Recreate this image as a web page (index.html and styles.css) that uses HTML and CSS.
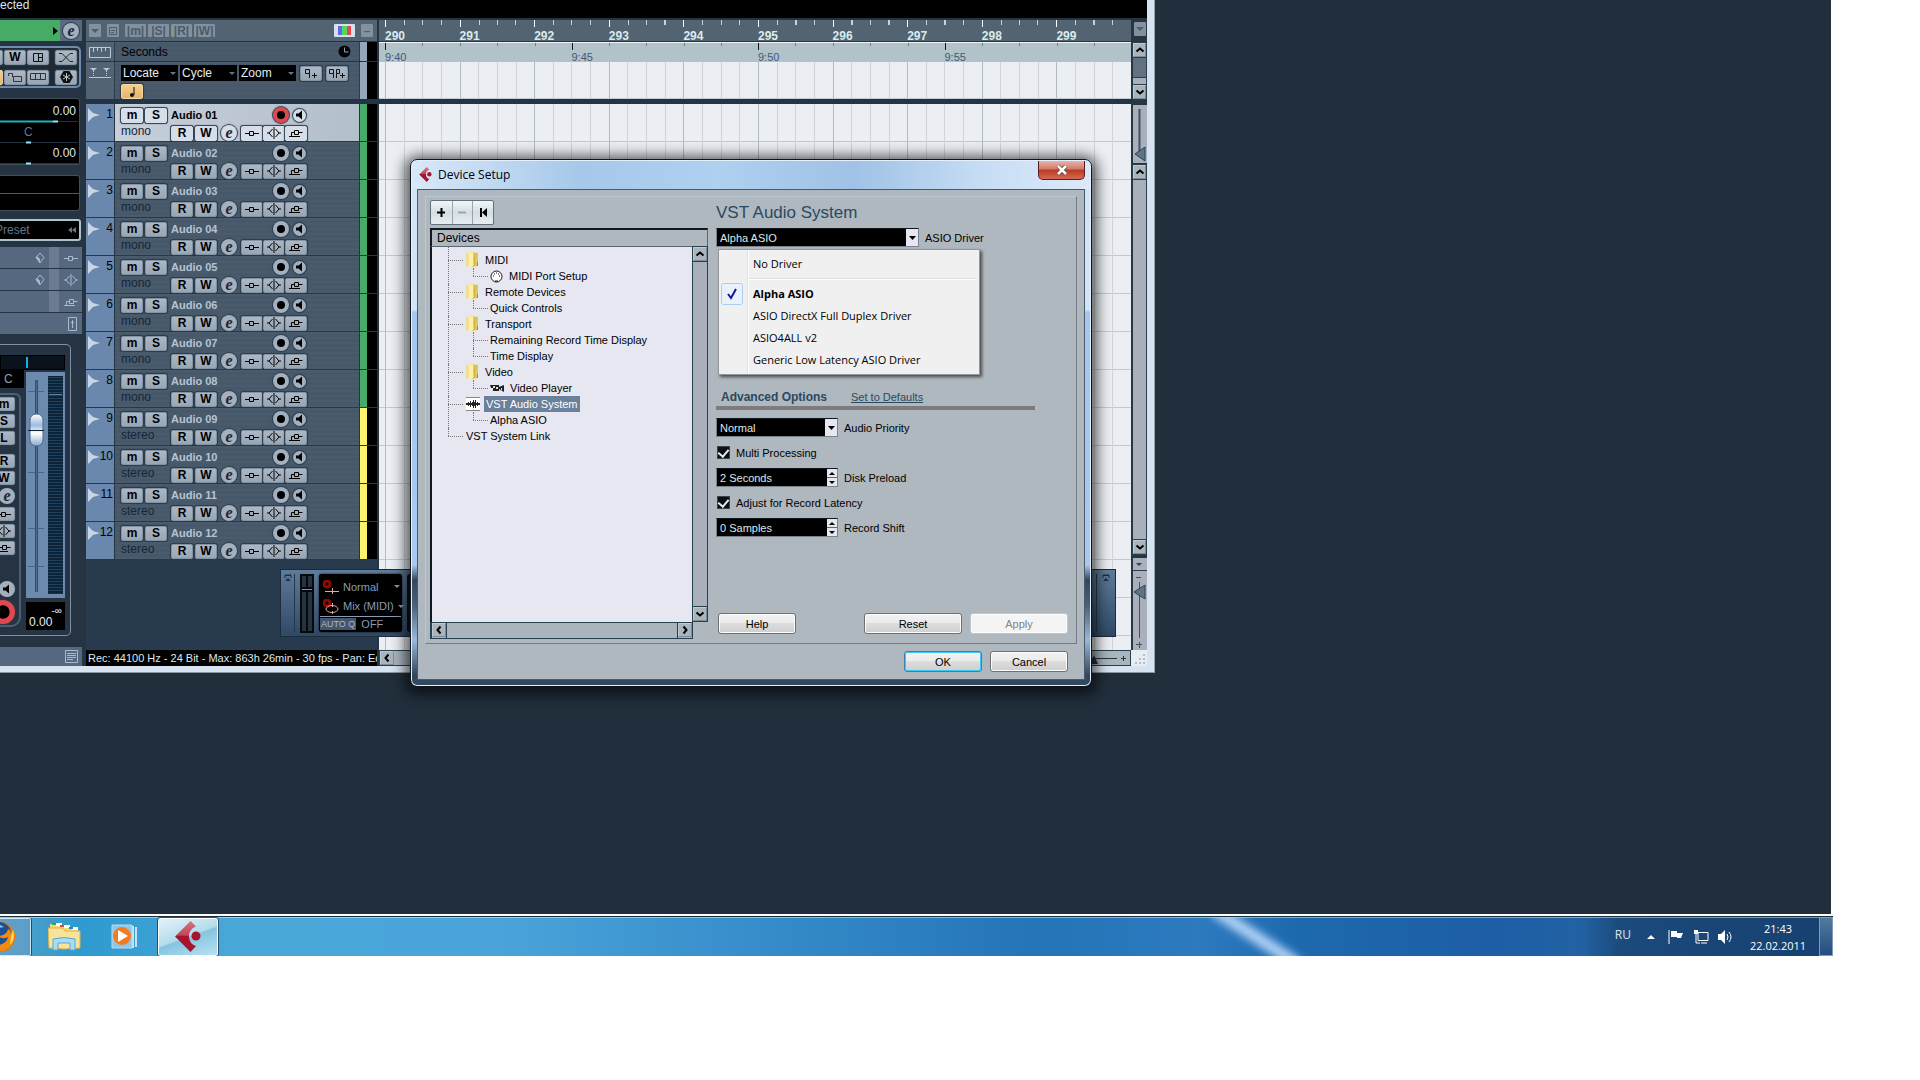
FILE: index.html
```html
<!DOCTYPE html>
<html lang="en">
<head>
<meta charset="utf-8">
<title>Device Setup</title>
<link rel="stylesheet" href="styles.css">
</head>
<body>
<svg class="symbols" aria-hidden="true">
  <symbol id="i-insert" viewBox="0 0 14 10"><path d="M0 5.500h4M9 5.500h5M4.500 3.500h4v4h-4z" fill="none" stroke="currentColor"/></symbol>
  <symbol id="i-eq" viewBox="0 0 14 12"><path d="M0 6h2M12 6h2M7 0v12M5.500 2L2 6l3.500 4M8.500 2L12 6l-3.500 4" fill="none" stroke="currentColor"/></symbol>
  <symbol id="i-send" viewBox="0 0 14 10"><path d="M0 8.500h11M2.500 8.500v-4h3M5.500 2.500h4v4h-4zM9.500 4.500h4" fill="none" stroke="currentColor"/></symbol>
  <symbol id="i-speaker" viewBox="0 0 10 10"><path d="M1 3.500h2.500L7 .5v9L3.500 6.500H1z" fill="currentColor"/></symbol>
  <symbol id="i-rec" viewBox="0 0 16 16"><circle cx="8" cy="8" r="4" fill="#000"/></symbol>
  <symbol id="i-wave" viewBox="0 0 12 14"><path d="M0 0L5 5 12 7 5 9 0 14z" fill="#c9d4e4"/></symbol>
  <symbol id="i-up" viewBox="0 0 10 10"><path d="M1.500 6.500L5 3.500l3.500 3" fill="none" stroke="currentColor" stroke-width="2"/></symbol>
  <symbol id="i-down" viewBox="0 0 10 10"><path d="M1.500 3.500L5 6.500l3.500-3" fill="none" stroke="currentColor" stroke-width="2"/></symbol>
  <symbol id="i-left" viewBox="0 0 10 10"><path d="M6.500 1.500L3.500 5l3 3.500" fill="none" stroke="currentColor" stroke-width="2"/></symbol>
  <symbol id="i-right" viewBox="0 0 10 10"><path d="M3.500 1.500L6.500 5l-3 3.500" fill="none" stroke="currentColor" stroke-width="2"/></symbol>
  <symbol id="i-tri" viewBox="0 0 8 4"><path d="M0 0h8L4 4z" fill="currentColor"/></symbol>
  <symbol id="i-diamond" viewBox="0 0 10 12"><path d="M5 1l4 4.500L5 11 1 5.500z" fill="none" stroke="currentColor"/><path d="M1 5.500L5 11V7L2 4z" fill="currentColor"/></symbol>
  <symbol id="i-folder" viewBox="0 0 13 16"><path d="M0 1l6-1v15l-6-1z" fill="#f3e08a"/><path d="M6 0l6 1v13l-6 1z" fill="#e2c458"/><path d="M3 1l5-1v14l-5 1z" fill="#fbf0b0"/><path d="M8 1v13" stroke="#c8a53c"/><path d="M11 10h1v4h-1z" fill="#4aa0e0"/></symbol>
  <symbol id="i-cubase" viewBox="0 0 26 31"><path d="M15.500 0L21 5.500A10 10 0 0 0 14 16a10 10 0 0 0 7 9L15.500 31 0 15.500z" fill="url(#cubase-red)"/><circle cx="21" cy="15" r="4.500" fill="#a8142c"/></symbol>
  <symbol id="i-eject" viewBox="0 0 8 8"><path d="M1 4V1h6v3M1 1.500h6" fill="none" stroke="currentColor"/><path d="M1 7h6L4 4z" fill="currentColor"/></symbol>
  <linearGradient id="cubase-red" x1="0" y1="0" x2="0" y2="1"><stop offset="0" stop-color="#d87480"/><stop offset=".45" stop-color="#c04858"/><stop offset=".5" stop-color="#a8142c"/><stop offset="1" stop-color="#a8142c"/></linearGradient>
</svg>

<main class="desktop">
  <section class="app">
    <header class="info-line">ected</header>
    <div class="workspace">

      <aside class="inspector">
        <div class="insp-title"><span class="insp-name"><svg width="5" height="8" viewBox="0 0 5 8"><path d="M0 0l5 4-5 4z"/></svg></span><button class="round edit">e</button></div>
        <div class="insp-tools">
          <button class="key" aria-label="Read"></button><button class="key">W</button>
          <button class="key"><svg width="10" height="9" viewBox="0 0 10 9"><path d="M.5.500h9v8h-9zM5.500 0v9M5.500 4.500h4" fill="none" stroke="#111"/></svg></button>
          <button class="key apart"><svg width="14" height="9" viewBox="0 0 14 9"><path d="M0 .5h3l8 8h3M0 8.500h3l8-8h3" fill="none" stroke="#222"/></svg></button>
          <button class="key amber"></button>
          <button class="key"><svg width="14" height="10" viewBox="0 0 14 10"><path d="M.5 4V1.500h4V5M5.500 4.500h8v5h-8z" fill="none" stroke="#333"/></svg></button>
          <button class="key"><svg width="16" height="8" viewBox="0 0 16 8"><path d="M.5.500h15v6H.5zM5.500 0v7M10.500 0v7" fill="none" stroke="#333"/></svg></button>
          <button class="key apart"><svg width="13" height="12" viewBox="0 0 13 12"><path d="M3.500 0h6L13 6l-3.500 6h-6L0 6z" fill="#111"/><path d="M6.500 2v8M3 4l7 4M3 8l7-4" stroke="#b5c2d0"/></svg></button>
        </div>
        <div class="insp-values">
          <div class="val">0.00</div><svg width="82" height="3"><path d="M0 1.500h78" stroke="#26323f"/><path d="M0 1.500h53" stroke="#20b0c0" stroke-width="2"/><path d="M53 1.500h5" stroke="#90e8ff" stroke-width="2"/></svg>
          <div class="val center">C</div><svg width="82" height="3"><path d="M0 1.500h78" stroke="#26323f"/><path d="M26 1.500h5" stroke="#90e8ff" stroke-width="2"/></svg>
          <div class="val">0.00</div><svg width="82" height="3"><path d="M0 1.500h78" stroke="#26323f"/><path d="M26 1.500h5" stroke="#90e8ff" stroke-width="2"/></svg>
        </div>
        <div class="insp-routing"></div>
        <div class="insp-preset"><span>Preset</span><svg width="8" height="6" viewBox="0 0 8 6"><path d="M4 0v6L0 3zM8 0v6L4 3z" fill="currentColor"/></svg></div>
        <div class="insp-sections">
          <div><svg width="10" height="12"><use href="#i-diamond"/></svg><i></i><svg width="14" height="10"><use href="#i-insert"/></svg></div>
          <div><svg width="10" height="12"><use href="#i-diamond"/></svg><i></i><svg width="14" height="12"><use href="#i-eq"/></svg></div>
          <div><i></i><svg width="14" height="10"><use href="#i-send"/></svg></div>
          <div><svg width="10" height="14" viewBox="0 0 10 14"><path d="M.5.500h8v13h-8zM4.500 3v8M3 5.500h3" fill="none" stroke="currentColor"/></svg></div>
        </div>
        <div class="insp-fader">
          <div class="pan"><i></i></div>
          <div class="strip">
            <div class="strip-left">
              <span class="pan-value">C</span>
              <div class="strip-keys">
                <button class="key">m</button><button class="key">S</button><button class="key">L</button>
                <button class="key spaced">R</button><button class="key">W</button>
                <button class="round edit">e</button>
                <button class="key"><svg width="14" height="10"><use href="#i-insert"/></svg></button>
                <button class="key"><svg width="14" height="12"><use href="#i-eq"/></svg></button>
                <button class="key"><svg width="14" height="10"><use href="#i-send"/></svg></button>
                <button class="round low"><svg width="10" height="10"><use href="#i-speaker"/></svg></button>
                <button class="round big armed"><svg width="20" height="20" viewBox="2 2 12 12"><use href="#i-rec" width="16" height="16"/></svg></button>
              </div>
            </div>
            <div class="strip-right">
              <svg width="39" height="226" viewBox="0 0 39 226">
                <defs><linearGradient id="knob" x1="0" y1="0" x2="0" y2="1"><stop offset="0" stop-color="#fff"/><stop offset=".35" stop-color="#9cbce0"/><stop offset=".6" stop-color="#fff"/><stop offset="1" stop-color="#88a8d0"/></linearGradient>
                <pattern id="led" width="4" height="3" patternUnits="userSpaceOnUse"><path d="M0 0h4v2H0z" fill="#0d2438"/><path d="M0 2h4v1H0z" fill="#1c4262"/></pattern></defs>
                <path d="M0 0h39v226H0z" fill="#6c89ae"/>
                <path d="M2 19.500h16M2 100.500h16M2 156.500h16M2 194.500h16" stroke="#496686"/>
                <path d="M10.500 8v212" stroke="#34506e" stroke-width="3"/><path d="M10.500 8v212" stroke="#4a6a8e"/>
                <path d="M22 4h15v218H22z" fill="url(#led)"/><path d="M23 22.500h13" stroke="#67808f"/>
                <path d="M22 221.500h15" stroke="#0a4020"/>
                <rect x="4" y="42" width="13" height="32" rx="6" fill="url(#knob)" stroke="#4d6888"/>
                <path d="M2 58.500h16" stroke="#102030"/>
              </svg>
              <div class="level"><span>-∞</span><span>0.00</span></div>
            </div>
          </div>
        </div>
        <div class="insp-foot"><svg width="13" height="13" viewBox="0 0 13 13"><path d="M.5.500h12v12H.5zM2 3.500h9M2 5.500h9M2 7.500h9M2 9.500h6" fill="none" stroke="currentColor"/></svg></div>
      </aside>

      <section class="tracklist">
        <div class="tl-toolbar">
          <button class="tool" aria-label="Menu"><svg width="8" height="4"><use href="#i-tri"/></svg></button>
          <button class="tool sp" aria-label="List"><svg width="8" height="8" viewBox="0 0 8 8"><path d="M.5.500h7v7h-7zM2 3.500h4M2 5.500h3" fill="none" stroke="currentColor"/></svg></button>
          <button class="tool wide">|m|</button><button class="tool wide">|S|</button><button class="tool wide">|R|</button><button class="tool wide">|W|</button>
          <button class="tool colors" aria-label="Colors"><svg width="13" height="9"><path d="M0 0h4v9H0z" fill="#6068e8"/><path d="M4 0h5v9H4z" fill="#50d860"/><path d="M9 0h4v9H9z" fill="#e84850"/></svg></button>
          <button class="tool">–</button>
        </div>
        <div class="tl-row seconds">
          <span class="tl-icon"><svg width="22" height="11" viewBox="0 0 22 11"><path d="M.5.500h21v10H.5zM4.500 1v4M8.500 1v3M12.500 1v4M16.500 1v3" fill="none" stroke="#bcc8d4"/></svg></span>
          <span class="tl-main">Seconds<svg width="13" height="13" viewBox="0 0 13 13"><circle cx="6.500" cy="6.500" r="6" fill="#050505"/><path d="M6.500 2.500v4.500h4" fill="none" stroke="#8da0b4"/></svg></span>
          <i class="tag"></i>
        </div>
        <div class="tl-row markers">
          <span class="tl-icon"><svg width="22" height="12" viewBox="0 0 22 12"><path d="M1 1h7L4.500 4zM14 1h7l-3.500 3zM0 10h22v1H0z" fill="#bcc8d4"/><path d="M4.500 4v6M17.500 4v6" stroke="#bcc8d4" stroke-dasharray="1 1"/></svg></span>
          <div class="tl-main">
            <div class="marker-line">
              <select aria-label="Locate"><option>Locate</option></select>
              <select aria-label="Cycle"><option>Cycle</option></select>
              <select aria-label="Zoom"><option>Zoom</option></select>
              <button class="key" aria-label="Add marker"><svg width="12" height="9" viewBox="0 0 12 9"><path d="M4.500 9V.5h-4v4h4M7 6.500h5M9.500 4v5" fill="none" stroke="#111"/></svg></button>
              <button class="key" aria-label="Add cycle marker"><svg width="16" height="9" viewBox="0 0 16 9"><path d="M4.500 9V.5h-4v4h4M7.500 9V.5h3v4h-3M11 6.500h5M13.500 4v5" fill="none" stroke="#111"/></svg></button>
            </div>
            <button class="key amber" aria-label="Musical time"><svg width="6" height="10" viewBox="0 0 6 10"><path d="M5 0v8" stroke="#111"/><circle cx="3" cy="8" r="2" fill="#111"/></svg></button>
          </div>
          <i class="tag"></i>
        </div>
        <div class="divider"></div>
        <div class="tracks" id="tracks"></div>
        <div class="tl-empty"></div>
        <footer class="status">Rec: 44100 Hz - 24 Bit - Max: 863h 26min - 30 fps - Pan: Equ</footer>
      </section>

      <section class="arrange">
        <div class="ruler-bars" id="bars"></div>
        <div class="ruler-time"><div class="times" id="times"></div></div>
        <div class="lane short"><div class="grid"></div></div>
        <div class="divider"></div>
        <div class="lane tall"><div class="grid"></div></div>
        <div class="hscroll"><button class="arrow" aria-label="Scroll left"><svg width="10" height="10"><use href="#i-left"/></svg></button><span></span><svg width="40" height="14" viewBox="0 0 40 14"><path d="M0 7.500h27M31 7.500h5M33.500 5v5" stroke="#26323f"/><path d="M0 13l4-9 4 9z" fill="#26323f"/></svg></div>
      </section>

      <div class="rail">
        <button class="tool" aria-label="Ruler menu"><svg width="8" height="4"><use href="#i-tri"/></svg></button>
        <div class="vscroll upper"><button class="arrow" aria-label="Up"><svg width="10" height="10"><use href="#i-up"/></svg></button><i></i><button class="arrow" aria-label="Down"><svg width="10" height="10"><use href="#i-down"/></svg></button></div>
        <svg class="zoomer" width="14" height="58" viewBox="0 0 14 58"><path d="M6.500 4v46" stroke="#3d5263" stroke-width="2"/><path d="M2 49l10-7v14z" fill="#5f7486" stroke="#2c4250"/></svg>
        <div class="vscroll fill"><button class="arrow" aria-label="Up"><svg width="10" height="10"><use href="#i-up"/></svg></button><span></span><button class="arrow" aria-label="Down"><svg width="10" height="10"><use href="#i-down"/></svg></button></div>
        <svg class="zoomer last" width="14" height="92" viewBox="0 0 14 92"><path d="M3 5h6l-3 3zM0 12h14v1H0z" fill="#2c4250"/><path d="M3 19.500h5M6.500 24v56M3 86.500h6M6.500 84v6" stroke="#3d5263"/><path d="M1 34l11-7v14z" fill="#5f7486" stroke="#2c4250"/></svg>
        <svg class="grip" width="16" height="16"><path d="M12 5h2M8 9h2M12 9h2M4 13h2M8 13h2M12 13h2" stroke="#b8bcc0" stroke-width="2"/></svg>
      </div>
    </div>

    <div class="transport">
      <svg width="8" height="8"><use href="#i-eject"/></svg><i class="rule"></i>
      <svg width="14" height="59" viewBox="0 0 14 59"><path d="M0 0h14v59H0z" fill="#05090d"/><path d="M2 2h4v55H2zM8 2h4v55H8z" fill="#253240"/><path d="M0 13h14v5H0z" fill="#05090d"/><path d="M2 15.500h10" stroke="#8090a0"/></svg>
      <div class="modes">
        <div><svg width="16" height="14" viewBox="0 0 16 14"><circle cx="4" cy="4" r="3" fill="none" stroke="#900800" stroke-width="3"/><path d="M2 11.500h14M9.500 8v6" stroke="#e8a8a0"/></svg><span>Normal</span><svg width="6" height="3"><use href="#i-tri"/></svg></div>
        <div><svg width="16" height="15" viewBox="0 0 16 15"><circle cx="4" cy="4" r="3" fill="none" stroke="#900800" stroke-width="3"/><ellipse cx="9" cy="10" rx="6" ry="3.500" fill="none" stroke="#e8a8a0"/><path d="M9.500 4v4M9.500 12v3" stroke="#e8a8a0"/></svg><span>Mix (MIDI)</span><svg width="6" height="3"><use href="#i-tri"/></svg></div>
        <div class="autoq"><b>AUTO Q</b>OFF</div>
      </div>
      <div class="controls"></div>
      <i class="rule"></i><svg width="8" height="8"><use href="#i-eject"/></svg>
    </div>
  </section>

  <section class="dialog" aria-label="Device Setup">
    <header class="dlg-title"><svg width="13" height="15"><use href="#i-cubase"/></svg><h1>Device Setup</h1><button class="close" aria-label="Close"><svg width="12" height="10" viewBox="0 0 12 10"><path d="M2 1l8 8M10 1L2 9" stroke="#5d3a3a" stroke-width="4"/><path d="M2 1l8 8M10 1L2 9" stroke="#fff" stroke-width="2.500"/></svg></button></header>
    <div class="client">
      <div class="panel">
        <div class="left">
          <div class="edit-bar">
            <button aria-label="Add"><svg width="9" height="9"><path d="M0 4.500h8M4.500 0v9" stroke="#000" stroke-width="2"/></svg></button>
            <button aria-label="Remove"><svg width="9" height="9"><path d="M0 4.500h8" stroke="#9aa6b0" stroke-width="2"/></svg></button>
            <button aria-label="Reset list"><svg width="9" height="9"><path d="M1 0h2v9H1zM8 0v9L3 4.500z" fill="#000"/></svg></button>
          </div>
          <div class="tree-box">
            <div class="tree-head">Devices</div>
            <div class="tree-area">
              <ul class="tree">
                <li><span class="row"><svg width="13" height="16"><use href="#i-folder"/></svg><span>MIDI</span></span>
                  <ul><li><span class="row"><svg width="13" height="13" viewBox="0 0 13 13"><circle cx="6.500" cy="6.500" r="5.500" fill="#fff" stroke="#111"/><path d="M3 6h1M9 6h1M4 4h1M8 4h1M6 3h1M5 11h3" stroke="#111"/></svg><span>MIDI Port Setup</span></span></li></ul></li>
                <li><span class="row"><svg width="13" height="16"><use href="#i-folder"/></svg><span>Remote Devices</span></span>
                  <ul><li><span class="row">Quick Controls</span></li></ul></li>
                <li><span class="row"><svg width="13" height="16"><use href="#i-folder"/></svg><span>Transport</span></span>
                  <ul><li><span class="row">Remaining Record Time Display</span></li><li><span class="row">Time Display</span></li></ul></li>
                <li><span class="row"><svg width="13" height="16"><use href="#i-folder"/></svg><span>Video</span></span>
                  <ul><li><span class="row"><svg width="14" height="7" viewBox="0 0 14 7"><path d="M0 0h9v6H3V3H1zM9 2l5-2v7l-5-3z" fill="#222"/><path d="M3 1h2v2H3zM6 2h2v2H6zM11 3h1v2h-1z" fill="#d8e0d8"/></svg><span>Video Player</span></span></li></ul></li>
                <li><span class="row"><svg width="14" height="14" viewBox="0 0 14 14"><path d="M0 1h14v12H0z" fill="#fff"/><path d="M0 .5h14M0 13.500h14" stroke="#888"/><path d="M0 6h2V5h1v1h1V4h1v2h1V5h1V3h1v2h1V3h1v3h1V5h1v1h2v2h-2v1h-1V8h-1v3H9V9H8v2H7V9H6V8H5v2H4V8H3v1H2V8H0z" fill="#222"/></svg><span class="picked">VST Audio System</span></span>
                  <ul><li><span class="row">Alpha ASIO</span></li></ul></li>
                <li><span class="row">VST System Link</span></li>
              </ul>
              <div class="vscroll"><button class="arrow" aria-label="Up"><svg width="10" height="10"><use href="#i-up"/></svg></button><span></span><button class="arrow" aria-label="Down"><svg width="10" height="10"><use href="#i-down"/></svg></button></div>
            </div>
            <div class="hbar"><button class="arrow" aria-label="Left"><svg width="10" height="10"><use href="#i-left"/></svg></button><span></span><button class="arrow" aria-label="Right"><svg width="10" height="10"><use href="#i-right"/></svg></button></div>
          </div>
        </div>

        <form class="right">
          <h2>VST Audio System</h2>
          <div class="field driver">
            <select id="driver" class="combo long"><option>Alpha ASIO</option></select><label for="driver">ASIO Driver</label>
            <div class="menu" role="menu">
              <button type="button">No Driver</button>
              <hr>
              <button type="button" class="current"><svg width="22" height="22" viewBox="0 0 22 22"><rect x=".5" y=".5" width="21" height="21" rx="2" fill="#e9f1fb" stroke="#a9cdf2"/><path d="M7 11l3 4 5-9" fill="none" stroke="#1414a0" stroke-width="2"/></svg>Alpha ASIO</button>
              <button type="button">ASIO DirectX Full Duplex Driver</button>
              <button type="button">ASIO4ALL v2</button>
              <button type="button">Generic Low Latency ASIO Driver</button>
            </div>
          </div>
          <div class="adv"><h3>Advanced Options</h3><a href="#defaults">Set to Defaults</a></div>
          <div class="field"><select id="priority" class="combo"><option>Normal</option></select><label for="priority">Audio Priority</label></div>
          <div class="field"><input type="checkbox" id="multi" checked><label for="multi">Multi Processing</label></div>
          <div class="field"><span class="spin"><input type="text" id="preload" value="2 Seconds"><span><button type="button" aria-label="More"></button><button type="button" class="dn" aria-label="Less"></button></span></span><label for="preload">Disk Preload</label></div>
          <div class="field"><input type="checkbox" id="latency" checked><label for="latency">Adjust for Record Latency</label></div>
          <div class="field"><span class="spin"><input type="text" id="shift" value="0 Samples"><span><button type="button" aria-label="More"></button><button type="button" class="dn" aria-label="Less"></button></span></span><label for="shift">Record Shift</label></div>
          <div class="actions"><button type="button" class="btn first">Help</button><button type="button" class="btn mid">Reset</button><button type="button" class="btn mid" disabled>Apply</button></div>
        </form>
      </div>
      <div class="dlg-foot"><button class="btn ok">OK</button><button class="btn">Cancel</button></div>
    </div>
  </section>
</main>

<nav class="taskbar">
  <button class="task running" aria-label="Firefox"><svg width="36" height="36" viewBox="0 0 36 36"><circle cx="18" cy="18" r="15" fill="#e8780c"/><circle cx="17" cy="15" r="12" fill="#1c4f94"/><path d="M8 8q6-5 14 0-8 2-14 0z" fill="#7ac0f0"/><path d="M31 9q4 9-1 16-6 8-16 7-9-2-11-10 8 7 14 4 8-2 9-8-6 3-9-1 8-1 9-7 3 1 3 6z" fill="#f28c10"/><path d="M31 11q3 9-3 15 0-8 3-15z" fill="#ffd84a"/></svg></button>
  <button class="task" aria-label="Explorer"><svg width="33" height="29" viewBox="0 0 33 29"><path d="M2 2h8l2 2h6l2 2h10v20H2z" fill="#f6d774"/><path d="M4 1h4v2H4z" fill="#20b830"/><path d="M8 1h6v3H8zM16 3h6v3h-6zM24 5h6v3h-6z" fill="#fff"/><path d="M12 3h4v2h-4z" fill="#d85030"/><path d="M21 5h4v2h-4z" fill="#3080d0"/><path d="M0 6h14l3 3h15v17q-16 2-31 0z" fill="#f8e39a" stroke="#d8b650"/><path d="M5 28V17q11-3 22 0v11h-5v-7H10v7z" fill="#a8dcf4" stroke="#5ca8d0"/></svg></button>
  <button class="task" aria-label="Media Player"><svg width="26" height="26" viewBox="0 0 26 26"><path d="M21 2h2v22h-2zM24 3h2v20h-2z" fill="#c8e4f4"/><path d="M1 1h20v23H1z" fill="#8cc8ea" stroke="#b8dcf0"/><circle cx="11" cy="12" r="9" fill="#f47a1c"/><path d="M7 6l10 6-10 6z" fill="#fff"/></svg></button>
  <button class="task active" aria-label="Cubase"><svg width="26" height="31"><use href="#i-cubase"/></svg></button>
  <div class="tray">
    <span class="lang">RU</span>
    <svg width="8" height="4" viewBox="0 0 8 4"><path d="M0 4h8L4 0z" fill="#fff"/></svg>
    <svg width="16" height="14" viewBox="0 0 16 14"><path d="M1 0v14" stroke="#fff" stroke-width="1"/><path d="M3 1h6v2h6l-2 5H9V7H3z" fill="#fff"/></svg>
    <svg width="16" height="14" viewBox="0 0 16 14"><path d="M5 2.500h10v8H5zM3 4v9h4M8 13h6" fill="none" stroke="#fff"/><path d="M1 0h4v4H1z" fill="#fff"/></svg>
    <svg width="16" height="14" viewBox="0 0 16 14"><path d="M0 4h3l4-4v14l-4-4H0z" fill="#fff"/><path d="M9 4q2 3 0 6M11 2q4 5 0 10" fill="none" stroke="#fff"/></svg>
    <time>21:43<br>22.02.2011</time>
    <button class="peek" aria-label="Show desktop"></button>
  </div>
</nav>
<script src="script.js"></script>
</body>
</html>
```
FILE: styles.css
```css
* { box-sizing: border-box; }
body { margin: 0; background: #fff; min-height: 100vh; display: flex; flex-direction: column; font: 11px/16px "Liberation Sans", Arial, sans-serif; color: #000; padding-bottom: 124px; overflow: hidden; }
button, select, input { font: inherit; color: inherit; margin: 0; padding: 0; border: 0; background: none; border-radius: 0; appearance: none; }
button { display: flex; align-items: center; justify-content: center; flex: none; }
svg { display: block; flex: none; }
ul { list-style: none; margin: 0; padding: 0; }
h1, h2, h3 { margin: 0; }
.symbols { position: absolute; width: 0; height: 0; }

/* Desktop and application window */
.desktop { position: relative; flex: 1; margin-right: 89px; background: #212e3b; overflow: hidden; margin-bottom: 2px; }
.app { position: absolute; left: 0; top: 0; right: 676px; padding: 0 7px 6px 0; background: #d7e3f0; border-right: 1px solid #9aa4ad; border-bottom: 1px solid #8f979e; }
.info-line { height: 20px; background: #000; border-bottom: 2px solid #263340; color: #dce8ee; font-size: 12px; line-height: 10px; }
.workspace { display: grid; grid-template-columns: 82px 295px minmax(0, 1fr) 16px; background: #263340; }
.divider { height: 5px; background: #243447; }

/* Shared controls */
.key { width: 22px; height: 15px; border-radius: 2px; background: linear-gradient(#adb8c5, #98a5b3); border: 1px solid #8393a3; box-shadow: 0 0 1px 1px #2b3a48; font-weight: bold; font-size: 12px; line-height: 12px; color: #000; }
.round { width: 16px; height: 16px; border-radius: 50%; background: #a3b0bf; box-shadow: 0 0 1px 1px #2b3a48; color: #000; }
.edit { font: italic bold 16px/14px "Liberation Serif", serif; color: #1c2630; }
.amber { background: linear-gradient(#f6cf90, #e8b468); border-color: #f6d8a4; }
.armed { background: #e0484e; }
.arrow { width: 14px; height: 14px; background: #a9b4bd; border: 1px solid #bfc9d1; border-right-color: #7f8c96; border-bottom-color: #7f8c96; color: #000; }
.tool { width: 12px; height: 13px; border-radius: 1px; background: #8290a0; color: #4c5c6a; font-weight: bold; }

/* Inspector */
.inspector { display: flex; flex-direction: column; overflow: hidden; background: #263342; }
.insp-title { display: flex; height: 21px; background: #5a6a80; }
.insp-name { flex: 1; background: #47ab66; display: flex; align-items: center; justify-content: flex-end; padding-right: 2px; }
.insp-title .round { margin: 3px; }
.insp-tools { margin: 5px 1px 0 -30px; height: 42px; border: 2px solid #6f8cae; border-left: 0; border-radius: 0 5px 5px 0; background: #1e2a36; display: flex; flex-wrap: wrap; gap: 5px 1px; justify-content: flex-end; align-content: center; padding-right: 2px; }
.insp-tools .apart { margin-left: 5px; }
.insp-values { margin: 10px 2px 0 0; height: 67px; background: #000; border: 1px solid #414d58; border-left: 0; border-radius: 0 3px 3px 0; padding-top: 3px; color: #dce8ee; }
.val { height: 18px; line-height: 18px; text-align: right; padding-right: 3px; font-size: 12px; }
.val.center { text-align: left; padding-left: 24px; color: #5f7a9c; }
.insp-routing { margin: 10px 2px 0 0; height: 36px; border: 1px solid #414d58; border-left: 0; border-radius: 0 3px 3px 0; background: linear-gradient(#000 17px, #505a64 17px, #505a64 18px, #000 18px); }
.insp-preset { margin: 8px 1px 0 -7px; height: 22px; border: 2px solid #a9c4cc; border-radius: 3px; background: #000; color: #607888; display: flex; justify-content: space-between; align-items: center; padding: 0 3px 0 0; font-size: 12px; }
.insp-sections { margin-top: 6px; display: grid; gap: 1px; color: #a9bace; }
.insp-sections div { height: 21px; background: #56687f; display: flex; align-items: center; justify-content: flex-end; padding-right: 4px; }
.insp-sections i { width: 10px; align-self: stretch; background: #6c7b8f; margin: 0 5px 0 4px; }
.insp-fader { margin: 10px 11px 0 0; height: 292px; border: 1px solid #8190a0; border-left: 0; border-radius: 0 5px 5px 0; padding-top: 10px; }
.pan { width: 65px; height: 15px; background: #0a121c; border: 1px solid #000; }
.pan i { display: block; width: 2px; height: 11px; margin: 1px 0 0 25px; background: #10b0e0; }
.strip { display: grid; grid-template-columns: 26px 39px; }
.pan-value { display: block; width: 24px; height: 18px; line-height: 18px; background: #000; color: #8fa0b4; padding-left: 4px; font-size: 12px; }
.strip-keys { width: 27px; margin: 5px 0 0 -6px; height: 234px; display: flex; flex-direction: column; align-items: flex-end; gap: 3px; padding: 2px 4px 0 0; border: 2px solid #4c5f76; border-left: 0; border-radius: 0 6px 10px 0; }
.strip-keys .key { height: 14px; }
.strip-keys .spaced { margin-top: 6px; }
.strip-keys .low { margin-top: 23px; }
.strip-keys .big { width: 24px; height: 24px; }
.strip-right { padding-top: 2px; }
.level { margin-top: 4px; height: 28px; background: #000; color: #e8eef2; font-size: 12px; line-height: 13px; padding: 4px 3px 2px; display: flex; flex-direction: column; }
.level span:first-child { text-align: right; line-height: 10px; font-size: 10px; }
.insp-foot { margin-top: 11px; height: 19px; background: #56687f; color: #a9bace; display: flex; justify-content: flex-end; align-items: center; padding-right: 4px; }

/* Track list */
.tracklist { padding-left: 4px; display: flex; flex-direction: column; min-width: 0; }
.tl-toolbar { height: 21px; background: #526371; display: flex; align-items: center; gap: 2px; padding: 0 4px 0 3px; }
.tl-toolbar .sp { margin: 0 4px; }
.tl-toolbar .wide { width: 21px; font-size: 12px; }
.tl-toolbar .colors { width: 21px; background: #d8e0ec; margin: 0 4px 0 auto; }
.tl-row { display: grid; grid-template-columns: 28px minmax(0, 1fr) 17px; column-gap: 1px; margin-top: 1px; background: #2c3d4d; }
.tl-icon { background: #526473; display: flex; justify-content: center; padding-top: 5px; }
.tl-main { background: repeating-linear-gradient(#4a5c6c 0 2px, #46586a 2px 5px); display: flex; padding: 0 8px 0 6px; }
.tag { background: linear-gradient(to right, #98a6ba 7px, #000 7px); }
.seconds { height: 19px; }
.seconds .tl-main { justify-content: space-between; align-items: center; font-size: 12px; }
.markers { height: 37px; }
.markers .tl-main { flex-direction: column; gap: 3px; padding-top: 3px; }
.marker-line { display: flex; gap: 2px; align-items: center; }
.marker-line select { width: 57px; height: 16px; padding-left: 2px; font-size: 12px; color: #e4edf2; background: url("data:image/svg+xml,%3Csvg xmlns='http://www.w3.org/2000/svg' width='8' height='16'%3E%3Cpath d='M0 7h6L3 10z' fill='%23607888'/%3E%3C/svg%3E") no-repeat right top #000; }
.marker-line .key { margin-left: 2px; }
.track { display: grid; grid-template-columns: 28px minmax(0, 1fr) 7px 10px; height: 38px; border-bottom: 1px solid #26384a; }
.track-no { background: #6a88ad; display: flex; justify-content: space-between; padding: 2px 1px 0 2px; font-size: 12px; }
.track-no svg { margin-top: 2px; }
.track-no span { margin-left: -3px; }
.track-body { margin: 0 1px; background: repeating-linear-gradient(#4a5c6c 0 2px, #46586a 2px 5px); padding: 3px 0 0 6px; display: grid; grid-template-rows: 15px 15px; row-gap: 3px; }
.line { display: grid; grid-template-columns: 22px 22px 102px 16px auto; align-items: center; justify-content: start; column-gap: 2px; }
.line .name { font-weight: bold; color: #b6c4d4; padding-left: 2px; }
.line .mini { width: 13px; height: 13px; margin-left: 2px; }
.line.two { grid-template-columns: 48px 22px 22px 16px auto; }
.line.two .mode { color: #152638; font-size: 12px; line-height: 13px; align-self: start; }
.line.two .edit { margin-left: 2px; }
.trio { display: flex; margin-left: 4px; }
.track-color { background: #48ab69; }
.track-color.stereo { background: #fdf36c; }
.track-level { background: #000; }
.track.selected .track-body { background: linear-gradient(to right, #c6cfda, #b4bfcc); }
.track.selected .key, .track.selected .round { background: #d5dee9; border-color: #d5dee9; }
.track.selected .round.armed { background: #e0484e; }
.track.selected .name { color: #000; }
.tl-empty { flex: 1; min-height: 90px; background: #283b4e; }
.status { height: 16px; background: #000; color: #dce8ee; padding-left: 2px; white-space: nowrap; overflow: hidden; }

/* Arrange view */
.arrange { padding-left: 2px; display: flex; flex-direction: column; min-width: 0; }
.ruler-bars { height: 21px; background: #526371; display: grid; grid-template-columns: repeat(10, 1fr); padding-left: 6px; }
.ruler-bars span { font: bold 12px/12px "Liberation Sans", sans-serif; color: #d9ebee; padding-top: 10px; background: linear-gradient(to right, #fff 1px, transparent 1px) 0 0 / 100% 7px no-repeat, repeating-linear-gradient(to right, #c8d2d8 0 1px, transparent 1px 25%) 0 0 / 100% 5px no-repeat; }
.ruler-time { height: 20px; margin-top: 1px; background: #b1c3c9; border-top: 1px solid #f0f4f6; padding-left: 6px; }
.times { height: 19px; display: grid; grid-template-columns: repeat(4, 1fr); }
.times span { color: #3f587c; padding-top: 5px; line-height: 18px; background: linear-gradient(to right, #101820 1px, transparent 1px) 0 0 / 100% 7px no-repeat, repeating-linear-gradient(to right, #6f8088 0 1px, transparent 1px 20%) 0 0 / 100% 3px no-repeat; }
.lane { background: #ebeff3; padding-left: 6px; }
.short { height: 37px; border-bottom: 1px solid #c5c9cd; }
.tall { flex: 1; background: repeating-linear-gradient(#ebeff3 0 37px, #c6c9cc 37px 38px); }
.grid { height: 100%; background: repeating-linear-gradient(to right, #b4babf 0 1px, transparent 1px 10%), repeating-linear-gradient(to right, #d0d4d7 0 1px, transparent 1px 2.5%); }
.hscroll { height: 16px; background: #a9b4bd; border: 1px solid #26404e; display: flex; align-items: center; }
.hscroll span { flex: 1; }

/* Right-hand rail */
.rail { display: flex; flex-direction: column; background: #27363f; padding-left: 2px; }
.rail > .tool { margin: 2px 1px 0; height: 14px; }
.vscroll { display: flex; flex-direction: column; align-items: center; background: #a9b0bb; border-right: 1px solid #26404e; gap: 1px; }
.vscroll span { flex: 1; align-self: stretch; }
.vscroll .arrow { width: 100%; box-shadow: 0 0 0 1px #26404e; }
.upper { margin-top: 7px; height: 56px; }
.upper i { flex: 1; align-self: stretch; background: linear-gradient(#62727f 19px, #26404e 19px, #26404e 20px, #a9b0bb 20px); }
.zoomer { background: #a9b0bb; margin: 6px 0 2px; }
.zoomer.last { margin: 4px 0 0; }
.fill { flex: 1; }
.grip { background: #e8edf2; margin-left: -2px; }

/* Transport panel */
.transport { position: absolute; left: 280px; right: 38px; top: 569px; height: 68px; display: flex; gap: 5px; padding: 4px 5px 4px 3px; border: 1px solid #1d2c3c; background: linear-gradient(#5f7b9a, #2f4965); color: #1f3040; }
.rule { width: 1px; margin-left: -3px; background: #24384c; }
.modes { width: 83px; flex: none; background: #000; border-radius: 3px; padding: 3px 1px 1px; color: #8b9bb4; display: flex; flex-direction: column; box-shadow: 0 0 2px #000; }
.modes div { height: 20px; display: flex; align-items: center; gap: 4px; padding: 0 1px 0 3px; white-space: nowrap; }
.modes div span { flex: 1; }
.modes .autoq { height: 15px; border-top: 1px solid #8b9bb4; gap: 5px; padding: 0; }
.autoq b { font-weight: normal; font-size: 9px; line-height: 12px; background: #45566c; color: #a9b8cc; padding: 0 1px; }
.controls { flex: 1; background: #111a24; border: 2px solid #0a1018; border-radius: 3px; margin-right: 6px; }

/* Dialog */
.dialog { position: absolute; left: 410px; top: 159px; width: 682px; padding: 0 6px 6px; border: 1px solid #10161c; border-radius: 7px; background: linear-gradient(#d2e4f7 0, #d2e4f7 150px, #a5c8ef 152px, #a9c9ee 405px, #33475e 420px, #4a6078 445px, #9ab8dc 480px, #33475e 515px); box-shadow: inset 0 0 0 1px #e4f1fd, 0 2px 14px 5px rgba(0, 0, 0, .65); }
.dlg-title { height: 28px; display: flex; align-items: flex-start; gap: 6px; margin: 1px -5px 0; padding: 6px 5px 0 7px; border-radius: 6px 6px 0 0; background: linear-gradient(to right, #d8e8f8, #a6c8ea 25%, #b0d0f0 45%, #9fc2e6 65%, #c8def5 85%, #dbeaf9); }
.dlg-title h1 { font: 12px/16px "Open Sans", "Noto Sans", sans-serif; flex: 1; }
.close { width: 47px; height: 19px; margin-top: -6px; border: 1px solid #5a1e1e; border-top: 0; border-radius: 0 0 5px 5px; background: linear-gradient(#e8b4a8, #d07a6a 45%, #b83a24 50%, #d46a50); }
.client { background: #afb7bf; border: 1px solid #4c5a68; padding: 6px 7px 7px; }
.panel { border: 1px solid #bcc9d4; border-right-color: #727b84; border-bottom-color: #727b84; padding: 3px 8px 4px 4px; display: grid; grid-template-columns: 278px minmax(0, 1fr); column-gap: 8px; }
.left { display: flex; flex-direction: column; gap: 3px; }
.edit-bar { width: 64px; height: 25px; display: grid; grid-template-columns: repeat(3, 1fr); border: 1px solid #62707c; border-radius: 2px; background: linear-gradient(#f2f6f8, #d4dee4 50%, #e8eef2); }
.edit-bar button + button { border-left: 1px solid #98a4ae; }
.tree-box { height: 411px; display: flex; flex-direction: column; }
.tree-head { height: 19px; line-height: 16px; padding-left: 5px; border: 1px solid #5c6670; border-top: 2px solid #10181f; border-left: 2px solid #10181f; font-size: 12px; }
.tree-area { flex: 1; display: grid; grid-template-columns: minmax(0, 1fr) 16px; background: #e6e7f0; border-left: 2px solid #10181f; }
.tree { padding: 5px 0 0 15px; }
.tree-area .vscroll { border: 1px solid #26404e; border-top: 0; }
.hbar { height: 17px; margin-right: 15px; display: flex; background: #a9b4bd; border: 1px solid #26404e; border-left-width: 2px; }
.hbar span { flex: 1; border: solid #26404e; border-width: 0 1px; }
.row { display: flex; align-items: center; height: 16px; gap: 4px; white-space: nowrap; }
.row > span { padding: 0 2px; }
.tree li { position: relative; padding-left: 19px; }
.tree ul li { padding-left: 18px; }
.tree li::before { content: ""; position: absolute; left: 1px; top: 0; bottom: 0; border-left: 1px dotted #777; }
.tree li::after { content: ""; position: absolute; left: 1px; top: 8px; width: 15px; border-top: 1px dotted #777; }
.tree li:last-child::before { bottom: auto; height: 8px; }
.tree > li:first-child::before { top: -5px; }
.tree ul { margin-left: 6px; }
.row > .picked { background: #6a809b; color: #fff; }

.right { display: flex; flex-direction: column; min-width: 0; }
.right h2 { font: 17px/26px "Liberation Sans", sans-serif; color: #2a4a60; margin-bottom: 2px; }
.field { height: 25px; display: flex; align-items: center; gap: 6px; }
.driver { height: 19px; position: relative; }
.combo { width: 122px; height: 19px; border: 1px solid #7a838c; border-top-color: #10181f; color: #dce8ee; padding-left: 3px; background: url("data:image/svg+xml,%3Csvg xmlns='http://www.w3.org/2000/svg' width='12' height='17'%3E%3Cpath d='M0 0h12v17H0z' fill='%23e6e7f0'/%3E%3Cpath d='M3 7h7l-3.500 4z'/%3E%3C/svg%3E") no-repeat right top #000; }
.combo.long { width: 203px; }
.menu { position: absolute; left: 2px; top: 21px; width: 262px; padding: 3px 2px; border: 1px solid #979797; background: linear-gradient(to right, #f0f0f0 28px, #e0e0e0 28px, #e0e0e0 29px, #fff 29px, #fff 30px, #f0f0f0 30px); box-shadow: 2px 2px 3px rgba(0, 0, 0, .6); font: 11px/20px "Open Sans", "Noto Sans", sans-serif; }
.menu button { width: 100%; height: 22px; justify-content: flex-start; padding-left: 32px; white-space: nowrap; }
.menu .current { font-weight: bold; padding-left: 0; gap: 10px; }
.menu hr { height: 2px; margin: 3px 0 3px 28px; border: 0; border-top: 1px solid #e0e0e0; background: #fff; }
.adv { display: flex; align-items: center; gap: 24px; margin: 141px 33px 5px 0; padding-left: 5px; height: 22px; border-bottom: 4px solid #7d7b7c; }
.adv h3 { font: bold 12px/18px "Liberation Sans", sans-serif; color: #2a4a60; }
.adv a { color: #2a4a60; }
.field input[type="checkbox"] { width: 13px; height: 13px; margin-left: 1px; background: #0c1014; border: 1px solid #3a444c; display: grid; place-items: center; }
.field input[type="checkbox"]::after { content: ""; width: 5px; height: 8px; border: solid #e6eef2; border-width: 0 2px 2px 0; transform: rotate(40deg); margin-top: -2px; }
.spin { width: 122px; height: 19px; display: grid; grid-template-columns: minmax(0, 1fr) 10px; border: 1px solid #7a838c; border-top-color: #10181f; background: #000; }
.spin input { color: #dce8ee; padding-left: 3px; min-width: 0; }
.spin > span { display: grid; grid-template-rows: 1fr 1fr; gap: 1px; background: #5c6670; }
.spin button { background: #e6e7f0; }
.spin button::after { content: ""; border: 3px solid transparent; border-top: 0; border-bottom-color: #000; }
.spin .dn::after { border-top: 3px solid #000; border-bottom: 0; }
.actions { margin: auto 0 5px 2px; display: flex; gap: 8px; }
.btn { width: 78px; height: 21px; border: 1px solid #707070; border-radius: 3px; box-shadow: inset 0 0 0 1px #fcfcfc; background: linear-gradient(#f2f2f2, #ebebeb 48%, #dddddd 50%, #cfcfcf); }
.btn.first { margin-right: auto; }
.btn.mid { width: 98px; }
.btn:disabled { background: #f4f4f4; border-color: #c2c6ca; color: #838383; }
.btn.ok { border-color: #3c7fb1; box-shadow: inset 0 0 0 1px #3cc8f4; }
.dlg-foot { display: flex; justify-content: flex-end; gap: 8px; padding: 7px 9px 0 0; }

/* Taskbar */
.taskbar { height: 40px; margin-right: 87px; display: flex; align-items: center; border-top: 1px solid #17303f; box-shadow: inset 0 1px 0 rgba(255, 255, 255, .45); background: linear-gradient(to right, #55a0c8 0, #2e9acf 80px, #49a8d8 240px, #4aa4da 500px, #3389c8 800px, #2474b8 1040px, #2d7abf 1200px, #1d69ae 1300px, #1d5ea6 1500px, #2262a4 1580px, #1b4a7c 1620px, #17406f 1833px); overflow: hidden; position: relative; }
.taskbar::before { content: ""; position: absolute; left: 1250px; top: -30px; width: 12px; height: 100px; background: #b4d4f8; filter: blur(4px); transform: rotate(-57deg); }
.task { height: 38px; width: 60px; }
.task.running { width: 31px; justify-content: flex-end; padding-right: 12px; overflow: hidden; border: 1px solid #cfe6f4; border-left: 0; border-radius: 0 2px 2px 0; box-shadow: 1px 0 0 #1e4a68; background: rgba(120, 160, 200, .4); margin-right: 3px; }
.task.active { margin-left: 4px; border: 1px solid #fff; border-radius: 2px; outline: 1px solid #28506a; background: linear-gradient(160deg, #e4f2f8, #b4dcec 48%, #86c4e0 52%, #b8e2f4); }
.tray { margin-left: auto; display: flex; align-items: center; align-self: stretch; gap: 9px; color: #fff; font: 12px/17px "Open Sans", "Noto Sans", sans-serif; }
.lang { margin-right: 7px; padding-bottom: 5px; color: #d8e4f0; }
.tray > svg:nth-of-type(1) { margin-right: 4px; }
.tray time { text-align: center; width: 76px; font-size: 11px; margin: 0 -6px 0 -3px; }
.peek { width: 14px; align-self: stretch; border: 1px solid #7e9cbc; background: linear-gradient(#5478a0, #244e80); }
```
FILE: script.js
```js
const icon = (id, w, h) => `<svg width="${w}" height="${h}"><use href="#i-${id}"/></svg>`;

const tracks = Array.from({ length: 12 }, (_, i) => ({
  no: i + 1,
  name: `Audio ${String(i + 1).padStart(2, "0")}`,
  mode: i < 8 ? "mono" : "stereo",
  selected: i === 0
}));

document.getElementById("tracks").innerHTML = tracks.map(t => `
  <div class="track${t.selected ? " selected" : ""}">
    <div class="track-no">${icon("wave", 12, 14)}<span>${t.no}</span></div>
    <div class="track-body">
      <div class="line">
        <button class="key">m</button><button class="key">S</button><span class="name">${t.name}</span>
        <button class="round${t.selected ? " armed" : ""}" aria-label="Record">${icon("rec", 16, 16)}</button>
        <button class="round mini" aria-label="Monitor">${icon("speaker", 10, 10)}</button>
      </div>
      <div class="line two">
        <span class="mode">${t.mode}</span><button class="key">R</button><button class="key">W</button>
        <button class="round edit">e</button>
        <span class="trio"><button class="key">${icon("insert", 14, 10)}</button><button class="key">${icon("eq", 14, 12)}</button><button class="key">${icon("send", 14, 10)}</button></span>
      </div>
    </div>
    <i class="track-color ${t.mode}"></i><i class="track-level"></i>
  </div>`).join("");

document.getElementById("bars").innerHTML =
  Array.from({ length: 10 }, (_, i) => `<span>${290 + i}</span>`).join("");
document.getElementById("times").innerHTML =
  ["9:40", "9:45", "9:50", "9:55"].map(t => `<span>${t}</span>`).join("");
```
